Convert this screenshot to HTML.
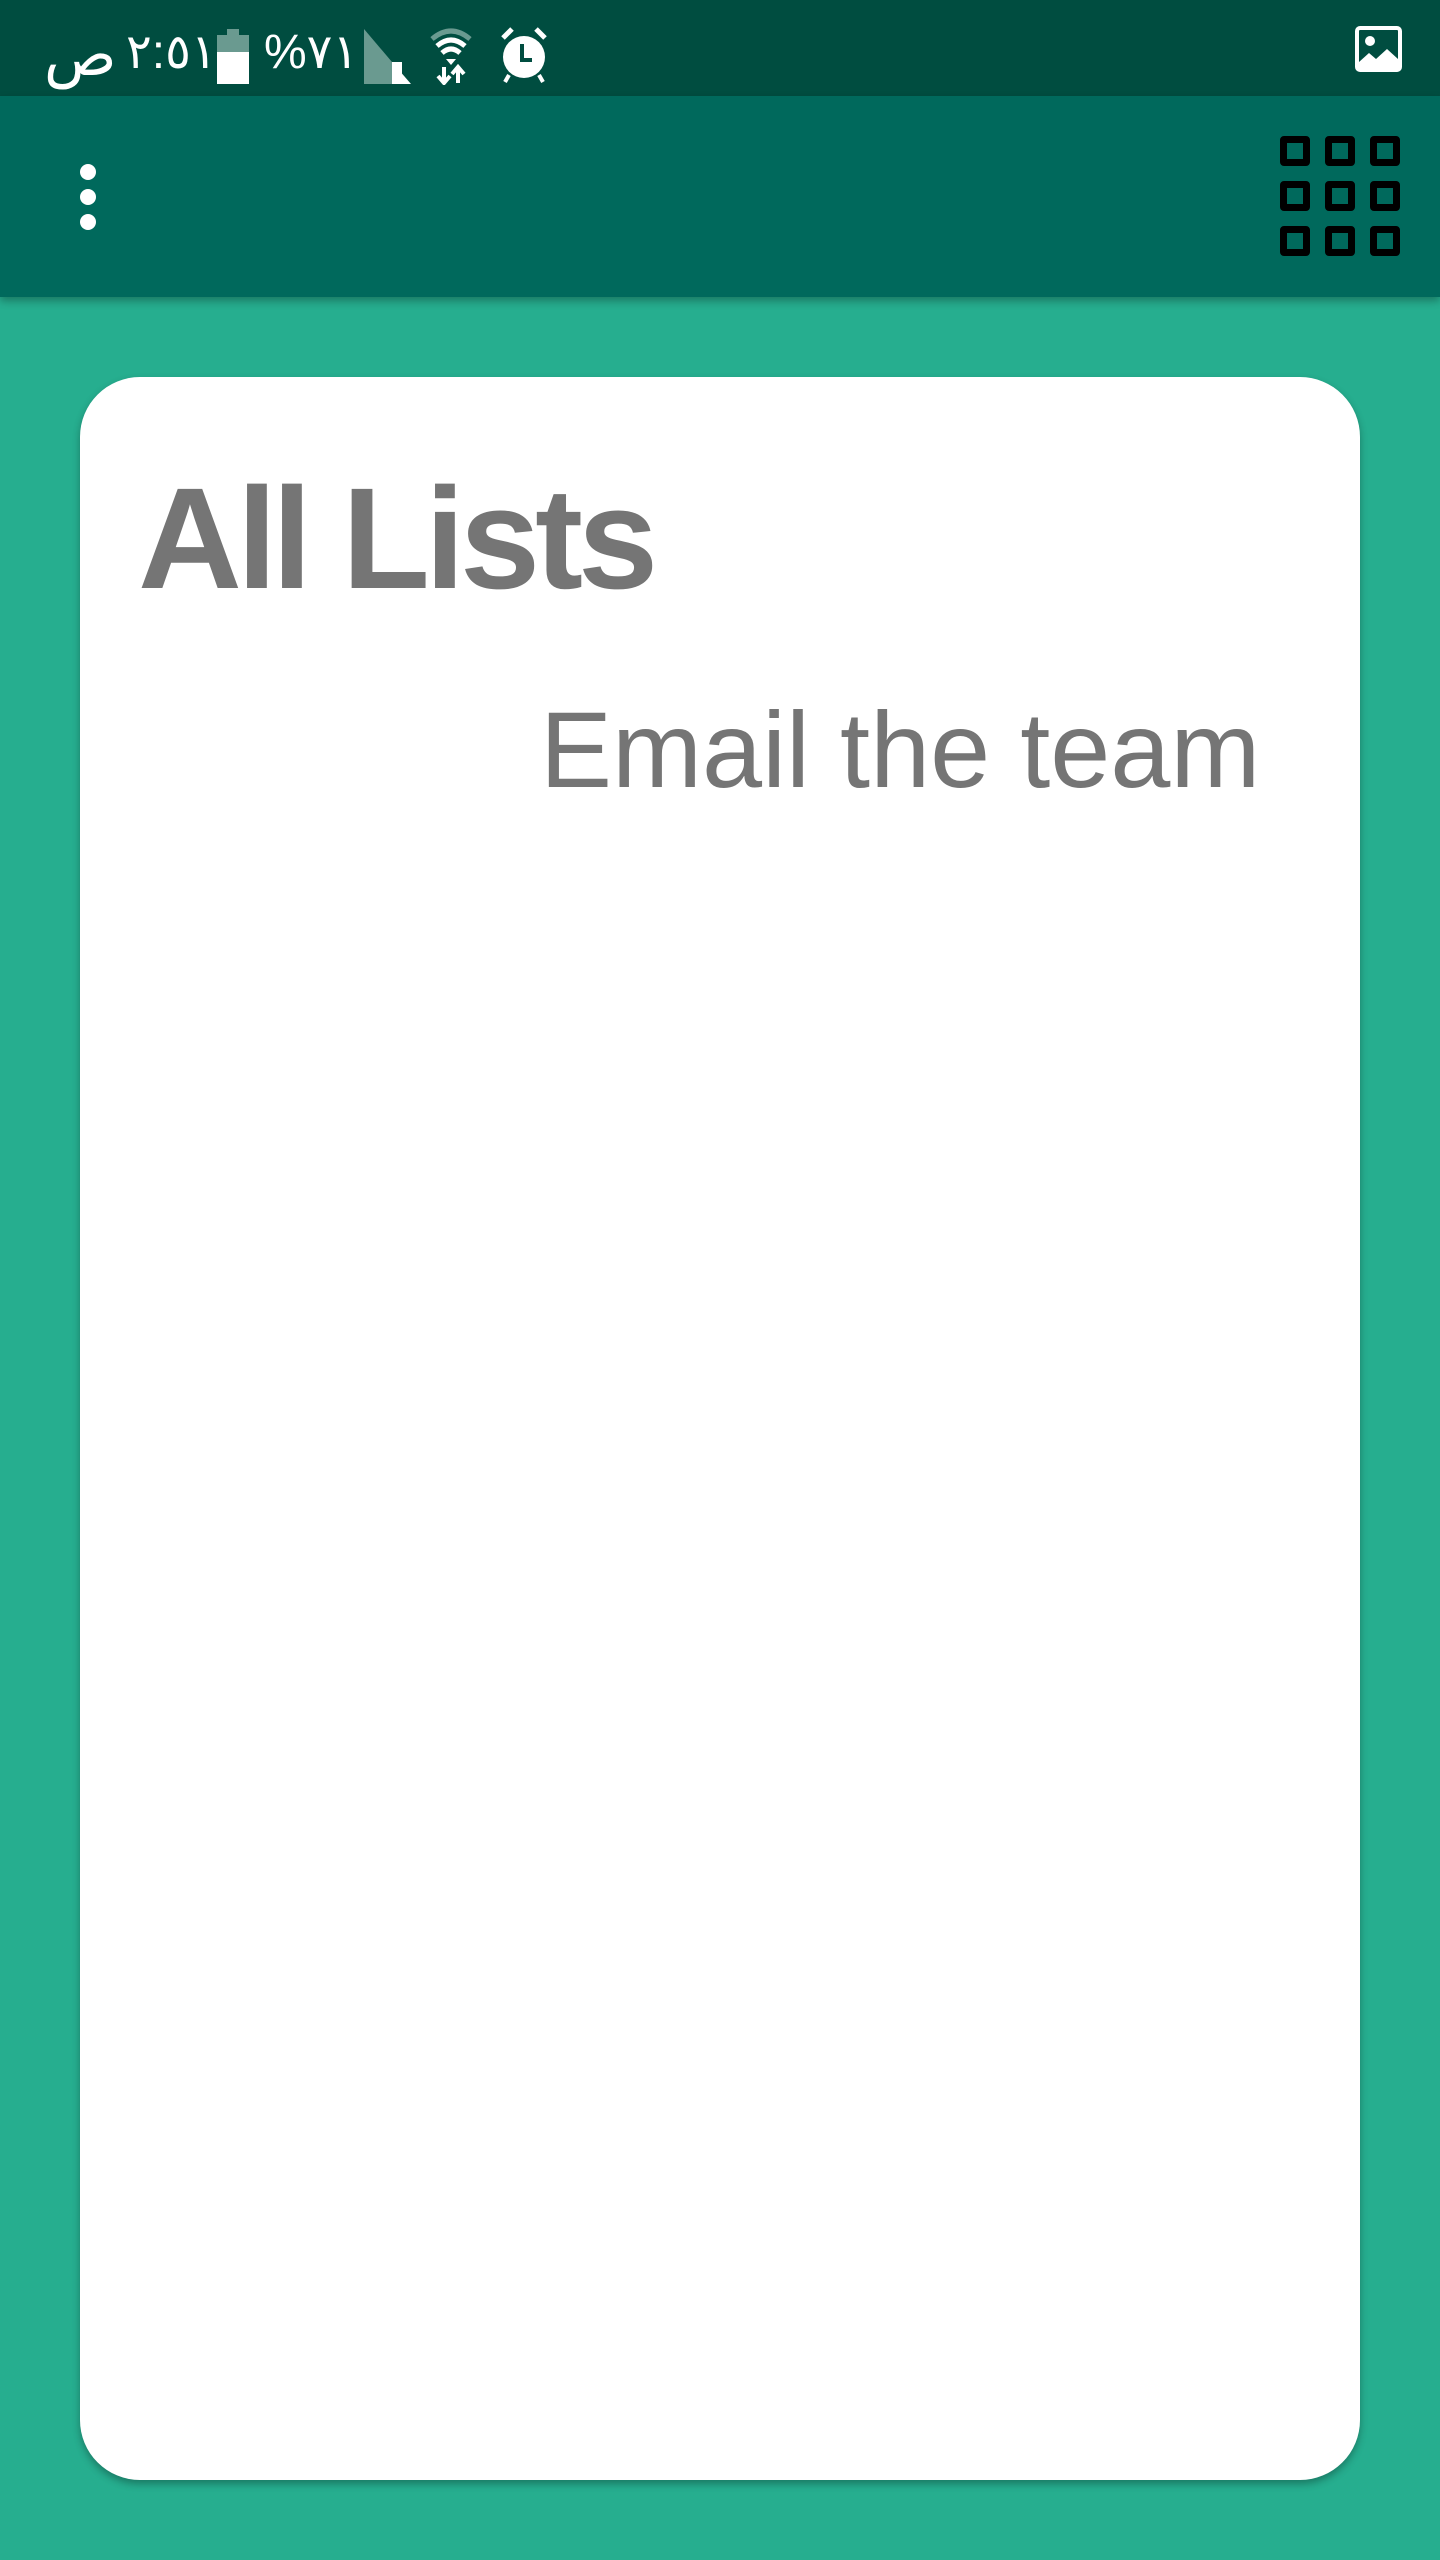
<!DOCTYPE html>
<html><head><meta charset="utf-8"><style>
html,body{margin:0;padding:0}
body{width:1440px;height:2560px;background:#26ae8f;position:relative;overflow:hidden;font-family:"Liberation Sans",sans-serif}
.sb{position:absolute;left:0;top:0;width:1440px;height:96px;background:#004d40}
.tb{position:absolute;left:0;top:96px;width:1440px;height:201px;background:#00695c;box-shadow:0 4px 8px rgba(0,0,0,.3)}
.dot{position:absolute;left:80px;width:16px;height:16px;border-radius:50%;background:#fff}
.g{position:absolute;width:16px;height:16px;border:7px solid #000;border-radius:4px}
.card{position:absolute;left:80px;top:377px;width:1280px;height:2103px;background:#fff;border-radius:60px;box-shadow:0 4px 8px rgba(0,0,0,.3)}
.t1{position:absolute;left:138px;top:459px;font-size:144px;font-weight:bold;color:#757575;letter-spacing:-5px;line-height:160px;white-space:nowrap}
.t2{position:absolute;left:540px;top:685px;font-size:108px;color:#757575;line-height:130px;white-space:nowrap}
.st{position:absolute;color:#fff;font-size:48px;top:18px;line-height:70px;font-family:"Liberation Sans","DejaVu Sans",sans-serif;white-space:nowrap;direction:ltr;unicode-bidi:bidi-override}
</style></head><body>
<div class="sb"></div>
<div class="st" style="left:44px;font-size:60px;top:20px">ص</div>
<div class="st" style="left:126px;letter-spacing:-1px">٢:٥١</div>
<svg style="position:absolute;left:217px;top:29px" width="32" height="55"><rect x="10" y="0" width="12" height="6" fill="#6a9a90"/><rect x="0" y="6" width="32" height="17" fill="#6a9a90"/><rect x="0" y="23" width="32" height="32" fill="#fff"/></svg>
<div class="st" style="left:264px">%٧١</div>
<svg style="position:absolute;left:364px;top:29px" width="52" height="55"><polygon points="0,0 28,33 28,55 0,55" fill="#6a9a90"/><polygon points="28,33 47,55 28,55" fill="#fff"/><rect x="28" y="33" width="10" height="22" fill="#fff"/></svg>
<svg style="position:absolute;left:429px;top:27px" width="44" height="58"><path d="M3,12 Q22,-4 41,12" stroke="#6a9a90" stroke-width="5" fill="none"/><path d="M8,19 Q22,7 36,19" stroke="#fff" stroke-width="5" fill="none"/><path d="M13,26 Q22,18 31,26" stroke="#fff" stroke-width="5" fill="none"/><polygon points="17,32 27,32 22,38" fill="#fff"/><path d="M15,40 V56 M9,49 L15,56 L21,49" stroke="#fff" stroke-width="4" fill="none"/><path d="M29,56 V41 M23,47 L29,40 L35,47" stroke="#fff" stroke-width="4" fill="none"/></svg>
<svg style="position:absolute;left:500px;top:27px" width="48" height="57"><circle cx="24" cy="30" r="21" fill="#fff"/><path d="M3,11 L12,2 M45,11 L36,2" stroke="#fff" stroke-width="5"/><path d="M22,17 V33 H32" stroke="#004d40" stroke-width="4" fill="none"/><path d="M9,48 L5,55 M39,48 L43,55" stroke="#fff" stroke-width="4"/></svg>
<svg style="position:absolute;left:1355px;top:26px" width="47" height="46"><rect x="2" y="2" width="43" height="42" rx="3" stroke="#fff" stroke-width="4" fill="none"/><circle cx="15" cy="15" r="5" fill="#fff"/><path d="M4,42 L4,36 L14,27 L21,33 L32,23 L43,33 L43,42 Z" fill="#fff"/></svg>
<div class="tb"></div>
<div class="dot" style="top:164px"></div><div class="dot" style="top:189px"></div><div class="dot" style="top:214px"></div>
<div class="g" style="left:1280px;top:136px"></div><div class="g" style="left:1325px;top:136px"></div><div class="g" style="left:1370px;top:136px"></div>
<div class="g" style="left:1280px;top:181px"></div><div class="g" style="left:1325px;top:181px"></div><div class="g" style="left:1370px;top:181px"></div>
<div class="g" style="left:1280px;top:226px"></div><div class="g" style="left:1325px;top:226px"></div><div class="g" style="left:1370px;top:226px"></div>
<div class="card"></div>
<div class="t1">All Lists</div>
<div class="t2">Email the team</div>
</body></html>
